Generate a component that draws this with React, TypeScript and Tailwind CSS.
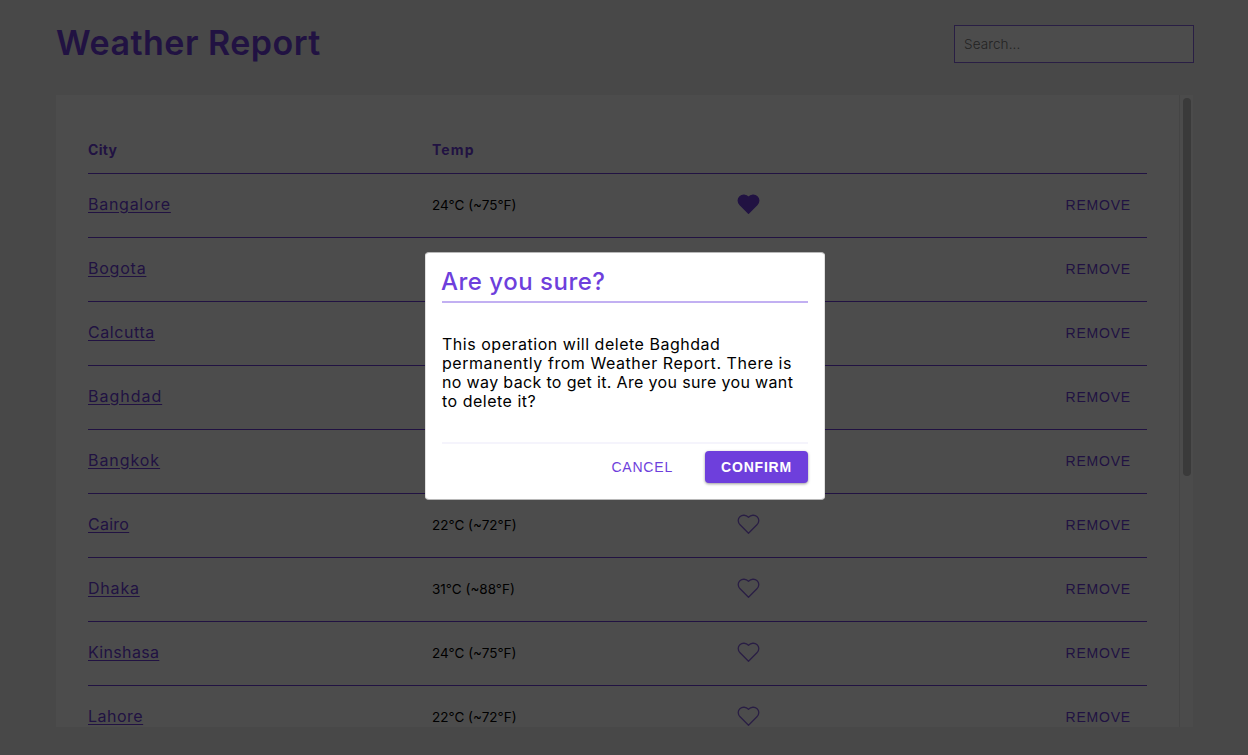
type City = { name: string; tracking: string; temp?: string; favorite?: boolean };

const cities: City[] = [
  { name: 'Bangalore', tracking: 'tracking-[0.73px]', temp: '24°C (~75°F)', favorite: true },
  { name: 'Bogota', tracking: 'tracking-[0.77px]' },
  { name: 'Calcutta', tracking: 'tracking-[0.58px]' },
  { name: 'Baghdad', tracking: 'tracking-[0.98px]' },
  { name: 'Bangkok', tracking: 'tracking-[0.94px]' },
  { name: 'Cairo', tracking: 'tracking-[0.26px]', temp: '22°C (~72°F)' },
  { name: 'Dhaka', tracking: 'tracking-[0.8px]', temp: '31°C (~88°F)' },
  { name: 'Kinshasa', tracking: 'tracking-[0.33px]', temp: '24°C (~75°F)' },
  { name: 'Lahore', tracking: 'tracking-[0.5px]', temp: '22°C (~72°F)' },
];

function Heart({ filled }: { filled?: boolean }) {
  return (
    <svg width="23" height="23" viewBox="0 0 24 24" className={filled ? 'mb-[3px] text-[#6e3fdc]' : 'mb-[3px] text-[#6e3fdc]/80'}>
      <path
        d="M12 21.1 L3.2 12.3 C0.6 9.7 0.7 5.8 3 3.8 C5.5 1.6 9.5 1.9 12 4.4 C14.5 1.9 18.5 1.6 21 3.8 C23.3 5.8 23.4 9.7 20.8 12.3 Z"
        fill={filled ? 'currentColor' : 'none'}
        stroke="currentColor"
        strokeWidth="1.4"
        strokeLinejoin="round"
      />
    </svg>
  );
}

function Row({ city }: { city: City }) {
  return (
    <div className="grid h-16 shrink-0 grid-cols-[344px_305px_1fr_auto] items-center border-b border-[#6e3fdc]">
      <div className="pb-1">
        <a href="#" className={`text-base leading-5 text-[#6e3fdc] underline decoration-1 underline-offset-2 ${city.tracking}`}>{city.name}</a>
      </div>
      <div className="pb-0.5 text-[13.5px] leading-5 text-black">{city.temp}</div>
      <Heart filled={city.favorite} />
      <button className="px-4 pb-0.5 font-['Liberation_Sans'] text-sm tracking-[0.8px] text-[#6e3fdc]">REMOVE</button>
    </div>
  );
}

export default function App() {
  return (
    <div className="relative h-[755px] overflow-hidden bg-[#f0f0f0] font-['Inter',sans-serif]">
      <div className="flex h-full flex-col pl-14 pr-[55px]">
        <header className="flex h-[95px] shrink-0 items-start justify-between pt-[25px]">
          <h1 className="-mt-px text-[34px] leading-[38px] font-semibold tracking-[0.5px] text-[#6e3fdc]">Weather Report</h1>
          <input
            placeholder="Search..."
            className="-mr-px h-[38px] w-60 border border-[#6e3fdc]/80 bg-white px-[9px] text-[13.5px] font-light tracking-[0.1px] placeholder:text-[#757575]"
          />
        </header>
        <main className="flex h-[632px] bg-white">
          <div className="flex h-full flex-1 flex-col overflow-hidden px-8">
            <div className="grid h-[79px] shrink-0 grid-cols-[344px_1fr] border-b border-[#6e3fdc] pt-[45px] text-sm font-bold text-[#6e3fdc]">
              <div className="tracking-[0.3px]">City</div>
              <div className="tracking-[1.1px]">Temp</div>
            </div>
            {cities.map((c) => <Row key={c.name} city={c} />)}
          </div>
          <div className="w-3.5 shrink-0 border-l border-[#e8e8e8] bg-[#fafafa] pt-[3px] pl-[3px]">
            <div className="h-[378px] w-2 rounded-full bg-[#c1c1c1]" />
          </div>
        </main>
      </div>
      <div className="absolute inset-0 flex items-center justify-center bg-black/70 pb-[3px] pl-0.5">
        <div role="dialog" className="flex h-[248px] w-[400px] flex-col rounded border border-[#b8b8b8] border-x-[#e0e0e0] bg-white px-4">
          <h2 className="h-[50px] shrink-0 border-b-2 border-[#c2b0f2] pt-[13px] text-2xl leading-8 font-medium tracking-[0.5px] text-[#6e3fdc]">
            <span className="-ml-px">Are you sure?</span>
          </h2>
          <p className="mt-8 h-[107px] text-base leading-[19px] whitespace-nowrap text-black">
            <span className="block tracking-[0.52px]">This operation will delete Baghdad</span>
            <span className="block tracking-[0.55px]">permanently from Weather Report. There is</span>
            <span className="block tracking-[0.35px]">no way back to get it. Are you sure you want</span>
            <span className="block tracking-[0.5px]">to delete it?</span>
          </p>
          <div className="flex items-start justify-end gap-4 border-t-2 border-[#f5f4fc] pt-[7px] font-['Liberation_Sans'] text-sm tracking-[0.8px]">
            <button className="h-8 px-4 text-[#6e3fdc]">CANCEL</button>
            <button className="h-8 w-[103px] rounded bg-[#6e3fdc] font-bold text-white shadow-[0_1px_3px_rgba(0,0,0,0.4)]">CONFIRM</button>
          </div>
        </div>
      </div>
    </div>
  );
}
